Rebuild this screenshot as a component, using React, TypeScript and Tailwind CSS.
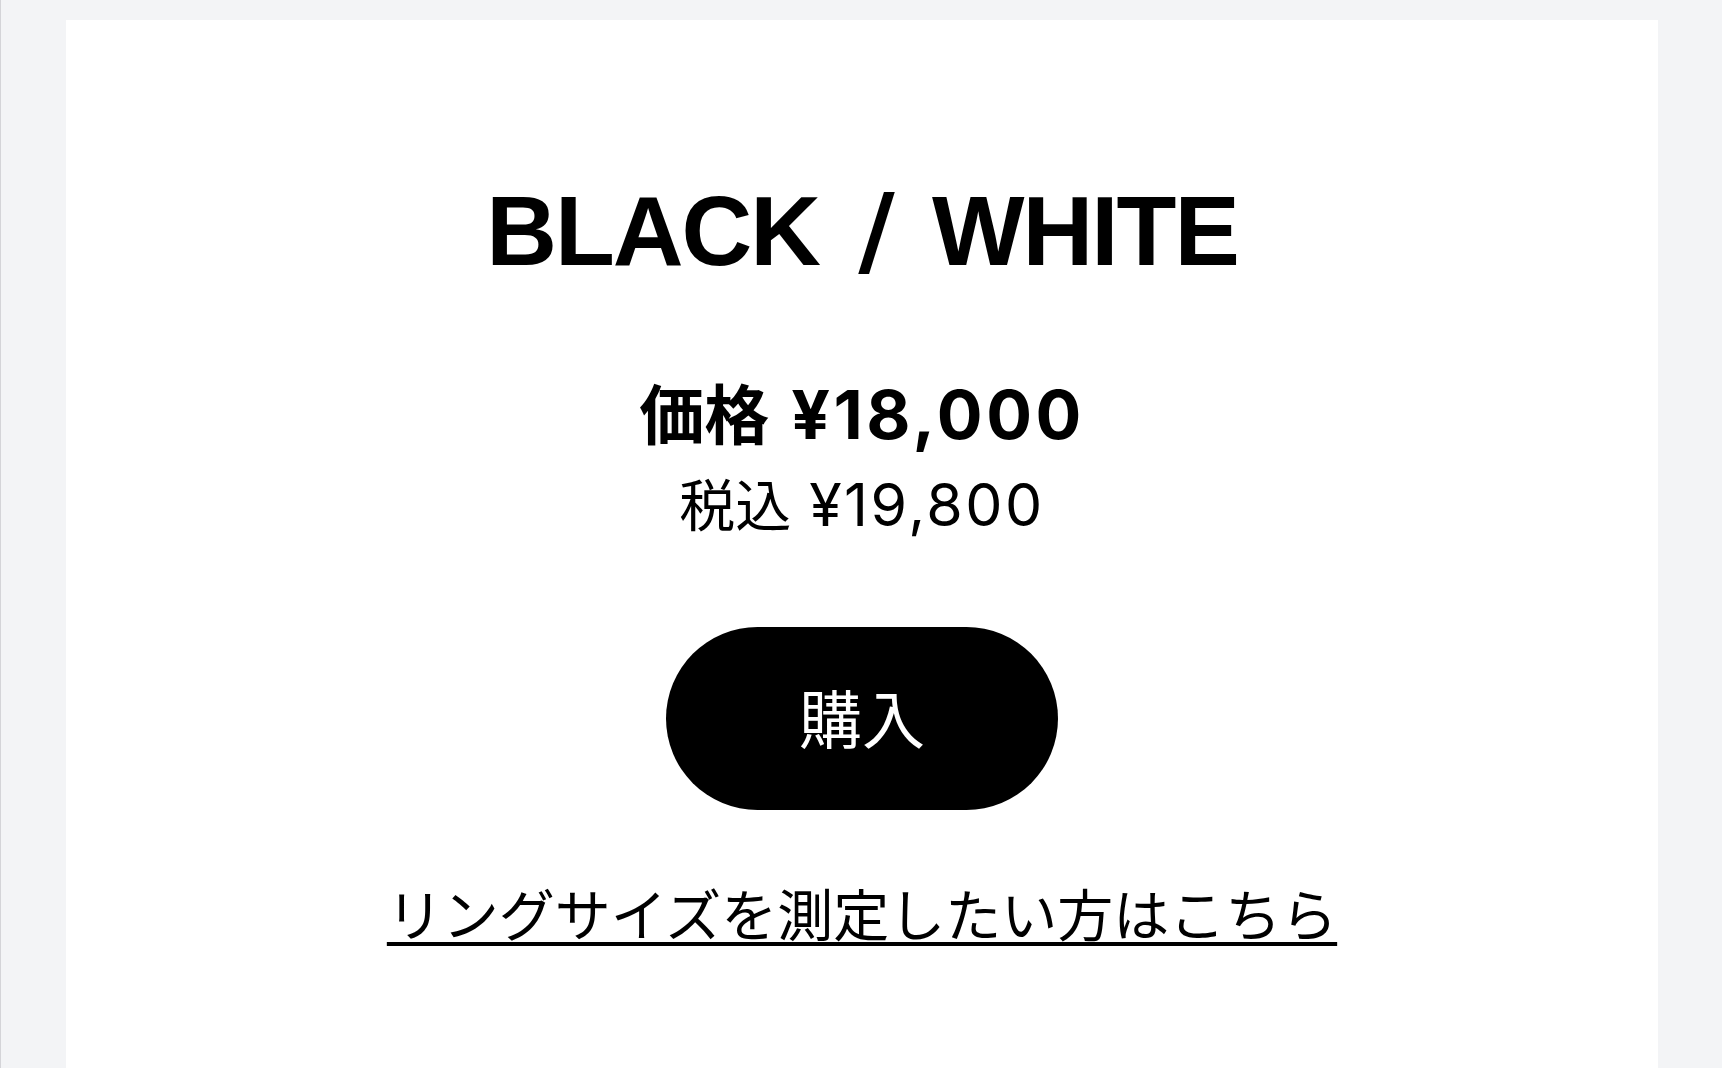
export default function App() {
  return (
    <div className="min-h-screen bg-[#f3f4f6] border-l border-[#d4d4d8] pl-[65px] pr-[64px] pt-[20px]">
      <section className="bg-white min-h-[1048px] flex flex-col items-center pt-[161px] text-black">
        <h1 className="font-['Liberation_Sans',Arial,sans-serif] font-bold text-[98px] leading-none tracking-[-2px] [word-spacing:14px]">
          BLACK <span className="font-['DejaVu_Sans',sans-serif] text-[100px]">/</span> WHITE
        </h1>

        {/* price block */}
        <p className="mt-[98px] flex items-baseline gap-[22px] font-bold leading-none">
          <span className="font-['Noto_Sans_CJK_JP',sans-serif] text-[65px]">価格</span>
          <span className="font-['Inter',sans-serif] text-[68px] tracking-[3.5px]">¥18,000</span>
        </p>
        <p className="mt-[26px] flex items-baseline gap-[18px] leading-none">
          <span className="font-['Noto_Sans_CJK_JP',sans-serif] text-[56px]">税込</span>
          <span className="font-['Inter',sans-serif] text-[59px] tracking-[2.5px]">¥19,800</span>
        </p>

        <button className="mt-[93px] w-[392px] h-[183px] pb-[6px] rounded-full bg-black text-white font-['Noto_Sans_CJK_JP',sans-serif] text-[63px] leading-none">
          購入
        </button>

        <a
          href="#ring-size"
          className="mt-[74px] font-['Noto_Sans_CJK_JP',sans-serif] text-[56px] leading-none underline decoration-[4px] underline-offset-[6px]"
        >
          リングサイズを測定したい方はこちら
        </a>
      </section>
    </div>
  );
}
